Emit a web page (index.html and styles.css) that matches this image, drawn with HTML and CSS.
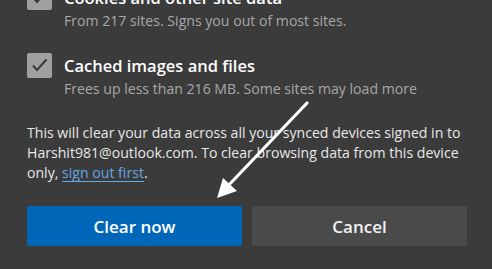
FILE: index.html
```html
<!DOCTYPE html>
<html lang="en">
<head>
  <meta charset="UTF-8">
  <meta name="viewport" content="width=device-width, initial-scale=1.0">
  <title>Clear browsing data</title>
  <link rel="stylesheet" href="styles.css">
</head>
<body>

  <div class="dialog">
    <!-- Data types -->
    <div class="options">
      <div class="option">
        <span class="checkbox">
          <svg viewBox="0 0 25 25" width="25" height="25"><polyline points="6,12.5 10,17 19.5,6.5" /></svg>
        </span>
        <div class="option-text">
          <div class="option-title">Cookies and other site data</div>
          <div class="option-desc">From 217 sites. Signs you out of most sites.</div>
        </div>
      </div>

      <div class="option">
        <span class="checkbox">
          <svg viewBox="0 0 25 25" width="25" height="25"><polyline points="6,12.5 10,17 19.5,6.5" /></svg>
        </span>
        <div class="option-text">
          <div class="option-title">Cached images and files</div>
          <div class="option-desc">Frees up less than 216 MB. Some sites may load more</div>
        </div>
      </div>
    </div>

    <p class="sync-note">
      This will clear your data across all your synced devices signed in to<br>
      Harshit981@outlook.com. To clear browsing data from this device<br>
      only, <a href="#">sign out first</a>.
    </p>

    <div class="actions">
      <button class="button primary">Clear now</button>
      <button class="button">Cancel</button>
    </div>
  </div>

  <!-- Annotation arrow -->
  <svg class="arrow" width="492" height="269" viewBox="0 0 492 269">
    <line x1="307" y1="103" x2="226" y2="188" />
    <polygon points="217,198 223,178 237,191" />
  </svg>

</body>
</html>
```

FILE: styles.css
```css
/* Variables */
:root {
  --bg-color: #3b3b3b;
  --text-color: #e8e8e8;
  --muted-color: #a8a8a8;
  --check-color: #a0a0a0;
  --link-color: #62a8e4;
  --primary-color: #0067b8;
  --secondary-color: #4a4a4a;
}

/* General Styles */
html, body {
  margin: 0;
  height: 100%;
  overflow: hidden;
}

body {
  font-family: 'Open Sans', 'Noto Sans', sans-serif;
  background-color: var(--bg-color);
  color: var(--text-color);
  position: relative;
}

.dialog {
  width: 440px;
  padding: 0 25px 0 27px;
  margin-top: -15px;
}

/* Options */
.option {
  display: flex;
  align-items: flex-start;
  gap: 12px;
  margin-bottom: 22px;
}

.option:last-child {
  margin-bottom: 0;
}

.checkbox {
  flex: none;
  width: 25px;
  height: 25px;
  border-radius: 2px;
  background-color: var(--check-color);
}

.checkbox svg {
  display: block;
}

.checkbox polyline {
  fill: none;
  stroke: #3a3a3a;
  stroke-width: 2;
}

.option-title {
  font-size: 16.5px;
  font-weight: 600;
  line-height: 26px;
  color: #fff;
}

.option-desc {
  font-size: 14.1px;
  line-height: 20px;
  color: var(--muted-color);
}

/* Sync note */
.sync-note {
  margin: 24px 0 0;
  font-size: 14.1px;
  line-height: 20px;
  white-space: nowrap;
}

.sync-note a {
  color: var(--link-color);
  text-decoration: underline;
  text-underline-offset: 3px;
}

/* Buttons */
.actions {
  display: grid;
  grid-template-columns: 1fr 1fr;
  gap: 10px;
  margin-top: 23px;
}

.button {
  height: 40px;
  border: none;
  border-radius: 2px;
  font-family: inherit;
  font-size: 17px;
  font-weight: 600;
  color: #f2f2f2;
  background-color: var(--secondary-color);
  cursor: pointer;
}

.button.primary {
  background-color: var(--primary-color);
  color: #fff;
}

/* Arrow overlay */
.arrow {
  position: absolute;
  left: 0;
  top: 0;
  pointer-events: none;
}

.arrow line {
  stroke: #fff;
  stroke-width: 3.2;
  stroke-linecap: round;
}

.arrow polygon {
  fill: #fff;
}
```
